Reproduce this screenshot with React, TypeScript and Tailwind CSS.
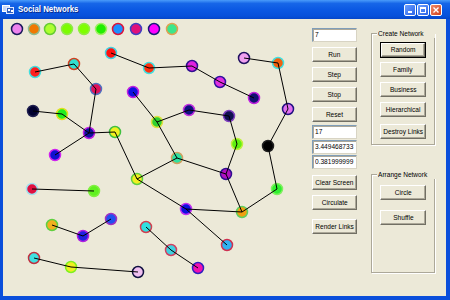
import React from "react";

type N = [number, number, string, string];

const top: N[] = [
  [17, 29, "#EE82EE", "#1a1a5a"],
  [34, 29, "#F07800", "#8FBC8F"],
  [50, 29, "#ADFF2F", "#66CC33"],
  [67, 29, "#7CFC00", "#8FE84A"],
  [84, 29, "#7FFF00", "#90EE40"],
  [101, 29, "#22EE00", "#A0F060"],
  [118, 29, "#1E90FF", "#DC143C"],
  [136, 29, "#E0107A", "#4040C0"],
  [154, 29, "#FF00FF", "#1A1A7A"],
  [172, 29, "#3CE68C", "#E0A050"],
];

const nodes: Record<string, N> = {
  a: [35, 72, "#FF2020", "#40E0E0"],
  b: [74, 64, "#30E0D0", "#D04020"],
  c: [111, 53, "#FF1010", "#40D0E0"],
  d: [149, 68, "#FF3010", "#40E0E0"],
  e: [96, 89, "#E0105A", "#5070C0"],
  f: [133, 92, "#1010E0", "#C020E0"],
  g: [33, 111, "#000030", "#202050"],
  h: [62, 114, "#20EE20", "#E0E020"],
  i: [89, 133, "#1010A0", "#C020E0"],
  j: [115, 132, "#F0F020", "#40C040"],
  k: [55, 155, "#1010D0", "#D020F0"],
  l: [192, 66, "#E020E0", "#301090"],
  m: [220, 82, "#E030E0", "#3010A0"],
  n: [254, 98, "#101070", "#C020E0"],
  o: [244, 58, "#F0A0F0", "#201060"],
  p: [278, 63, "#F06010", "#40E0E0"],
  q: [288, 109, "#E070F0", "#201080"],
  r: [268, 146, "#000000", "#202020"],
  s: [189, 110, "#101080", "#C030E0"],
  t: [229, 116, "#101050", "#8040C0"],
  u: [157, 122, "#30D030", "#E0E040"],
  v: [237, 144, "#60F010", "#C0F040"],
  w: [177, 158, "#30E0A0", "#D0A060"],
  x: [226, 174, "#B010C0", "#301090"],
  y: [137, 179, "#F0F020", "#60D040"],
  z: [186, 209, "#1010E0", "#C030F0"],
  aa: [242, 212, "#F0A010", "#60D060"],
  bb: [277, 189, "#30F030", "#80F060"],
  cc: [227, 245, "#30B0F0", "#D03050"],
  dd: [146, 227, "#30E0E0", "#D04050"],
  ee: [171, 250, "#40D0E0", "#D04060"],
  ff: [198, 268, "#F010B0", "#3020C0"],
  gg: [32, 189, "#E01040", "#A0E0F0"],
  hh: [94, 191, "#60F020", "#80F040"],
  ii: [52, 225, "#F0B020", "#60D040"],
  jj: [83, 236, "#2020E0", "#B020E0"],
  kk: [111, 219, "#2050F0", "#A030C0"],
  ll: [34, 258, "#40E0E0", "#C03040"],
  mm: [71, 267, "#F0F020", "#80F020"],
  nn: [138, 272, "#F0C0F0", "#101040"],
};

const edges: [string, string][] = [
  ["a", "b"], ["b", "e"], ["e", "i"], ["g", "h"], ["h", "i"], ["i", "j"], ["i", "k"],
  ["c", "d"], ["d", "l"], ["l", "m"], ["m", "n"], ["o", "p"], ["p", "q"], ["q", "r"],
  ["r", "bb"], ["f", "u"], ["u", "w"], ["u", "s"], ["s", "t"], ["t", "v"], ["v", "x"],
  ["j", "y"], ["y", "w"], ["y", "z"], ["w", "x"], ["x", "aa"], ["z", "aa"], ["aa", "bb"],
  ["z", "cc"], ["dd", "ee"], ["ee", "ff"], ["gg", "hh"], ["ii", "jj"], ["jj", "kk"],
  ["ll", "mm"], ["mm", "nn"],
];

function Btn({ label, def = false, cls = "" }: { label: string; def?: boolean; cls?: string }) {
  const inner = (
    <div className="flex h-full w-full items-center justify-center border border-t-white border-l-white border-r-[#716F64] border-b-[#716F64] bg-[#ECE9D8] shadow-[inset_-1px_-1px_0_#ACA899]">
      <span className="inline-block scale-x-[0.82] whitespace-nowrap text-[8px] leading-none text-black">{label}</span>
    </div>
  );
  return def ? (
    <div className={`h-[15px] border border-black ${cls}`}>{inner}</div>
  ) : (
    <div className={`h-[15px] ${cls}`}>{inner}</div>
  );
}

function Field({ value, cls = "" }: { value: string; cls?: string }) {
  return (
    <div className={`flex h-[14px] items-center overflow-hidden border border-t-[#7F9DB9] border-l-[#7F9DB9] border-r-[#D8D4C4] border-b-[#D8D4C4] bg-white pl-[2px] shadow-[inset_1px_1px_0_#ACA899] ${cls}`}>
      <span className="inline-block origin-left scale-x-[0.82] whitespace-nowrap text-[8px] leading-none text-black">{value}</span>
    </div>
  );
}

function Group({ title, children, cls = "" }: { title: string; children: React.ReactNode; cls?: string }) {
  return (
    <div className={`flex flex-col border border-[#ACA899] shadow-[inset_1px_1px_0_#fff,1px_1px_0_#fff] ${cls}`}>
      <div className="-mt-[5px] ml-[5px] self-start whitespace-nowrap bg-[#ECE9D8] px-[1px] text-[8px] leading-[9px] text-black">
        <span className="inline-block origin-left scale-x-[0.82]">{title}</span>
      </div>
      {children}
    </div>
  );
}

export default function App() {
  return (
    <div className="flex h-[300px] w-[450px] flex-col bg-[#0A4EDB] font-['Liberation_Sans',sans-serif]">
      <div className="flex h-[19px] items-center bg-[linear-gradient(to_bottom,#4A9BFA_0%,#1766E8_18%,#0A57E2_55%,#0650DA_85%,#0546C8_100%)] pl-[2px] pr-[8px]">
        <svg width="12" height="11" viewBox="0 0 12 11" className="mt-[-1px]">
          <rect x="0.5" y="1.5" width="7" height="6" fill="#C8D8F8" stroke="#FFFFFF" />
          <rect x="4.5" y="3.5" width="7" height="6" fill="#3060C0" stroke="#E0E8FF" />
          <rect x="6" y="5" width="2" height="2" fill="#fff" />
          <rect x="9" y="6" width="2" height="2" fill="#fff" />
        </svg>
        <span className="ml-[4px] inline-block origin-left scale-x-[0.92] whitespace-nowrap text-[8.5px] font-bold leading-none text-white [text-shadow:1px_1px_0_#0A2A8A]">Social Networks</span>
        <div className="ml-auto flex gap-[1px]">
          <div className="flex h-[12px] w-[12px] items-end justify-center rounded-[2px] border border-white bg-[linear-gradient(135deg,#6CA0FF,#2A63E8)] pb-[2px]">
            <div className="h-[2px] w-[4px] bg-white" />
          </div>
          <div className="flex h-[12px] w-[12px] items-center justify-center rounded-[2px] border border-white bg-[linear-gradient(135deg,#6CA0FF,#2A63E8)]">
            <div className="h-[6px] w-[6px] border border-t-2 border-white" />
          </div>
          <div className="flex h-[12px] w-[12px] items-center justify-center rounded-[2px] border border-white bg-[linear-gradient(135deg,#F08A6A,#D2411C)]">
            <svg width="6" height="6" viewBox="0 0 6 6">
              <path d="M0.5 0.5 L5.5 5.5 M5.5 0.5 L0.5 5.5" stroke="#fff" strokeWidth="1.4" />
            </svg>
          </div>
        </div>
      </div>
      <div className="mb-[4px] ml-[3px] mr-[4px] flex flex-1 bg-[#ECE9D8]">
        <div className="w-[309px]">
          <svg width="309" height="277" viewBox="3 19 309 277">
            {top.map(([cx, cy, f, s], idx) => (
              <circle key={idx} cx={cx} cy={cy} r="5.5" fill={f} stroke={s} strokeWidth="1.5" />
            ))}
            {Object.entries(nodes).map(([k, [cx, cy, f, s]]) => (
              <circle key={k} cx={cx} cy={cy} r="5.5" fill={f} stroke={s} strokeWidth="1.5" />
            ))}
            {edges.map(([p1, p2], idx) => (
              <line key={idx} x1={nodes[p1][0]} y1={nodes[p1][1]} x2={nodes[p2][0]} y2={nodes[p2][1]} stroke="#000" strokeWidth="1" />
            ))}
          </svg>
        </div>
        <div className="flex gap-[14px] pr-[11px]">
          <div className="flex w-[45px] flex-col pt-[9px]">
            <Field value="7" />
            <Btn label="Run" cls="mt-[5px]" />
            <Btn label="Step" cls="mt-[5px]" />
            <Btn label="Stop" cls="mt-[5px]" />
            <Btn label="Reset" cls="mt-[5px]" />
            <Field value="17" cls="mt-[3px]" />
            <Field value="3.449468733" cls="mt-[1px]" />
            <Field value="0.381999999" cls="mt-[1px]" />
            <Btn label="Clear Screen" cls="mt-[6px]" />
            <Btn label="Circulate" cls="mt-[5px]" />
            <Btn label="Render Links" cls="mt-[9px]" />
          </div>
          <div className="flex w-[64px] flex-col pt-[14px]">
            <Group title="Create Network" cls="h-[112px]">
              <div className="flex flex-col px-[8px] pt-[4px]">
                <Btn label="Random" def cls="h-[16px]" />
                <Btn label="Family" cls="mt-[4px]" />
                <Btn label="Business" cls="mt-[5px]" />
                <Btn label="Hierarchical" cls="mt-[5px]" />
                <Btn label="Destroy Links" cls="mt-[7px]" />
              </div>
            </Group>
            <Group title="Arrange Network" cls="mt-[29px] h-[99px]">
              <div className="flex flex-col px-[8px] pt-[6px]">
                <Btn label="Circle" />
                <Btn label="Shuffle" cls="mt-[10px]" />
              </div>
            </Group>
          </div>
        </div>
      </div>
    </div>
  );
}
